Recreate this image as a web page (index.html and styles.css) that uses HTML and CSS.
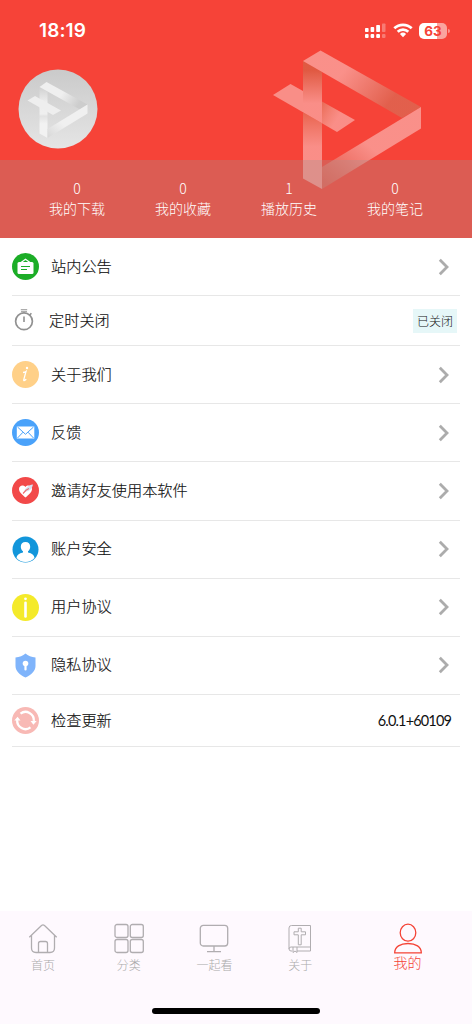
FILE: index.html
```html
<!DOCTYPE html>
<html lang="zh-CN">
<head>
<meta charset="utf-8">
<title>我的</title>
<link rel="stylesheet" href="styles.css">
</head>
<body>
<svg class="defs" width="0" height="0" aria-hidden="true">
  <defs>
    <linearGradient id="fold-top" x1="0" x2="1" y1="0" y2=".45"><stop offset=".4" stop-color="#fff" stop-opacity=".41"/><stop offset=".9" stop-color="#c98265" stop-opacity=".45"/></linearGradient>
    <linearGradient id="fold-upper" x1="0" x2="0" y1="0" y2="1"><stop offset=".15" stop-color="#c27850" stop-opacity=".42"/><stop offset=".68" stop-color="#fff" stop-opacity=".4"/></linearGradient>
    <linearGradient id="fold-lower" x1="0" x2="0" y1="0" y2="1"><stop offset="0" stop-color="#d88a68" stop-opacity=".45"/><stop offset=".45" stop-color="#fff" stop-opacity=".4"/></linearGradient>
    <linearGradient id="fold-bottom" x1="1" x2="0" y1="0" y2="1"><stop offset=".5" stop-color="#fff" stop-opacity=".41"/><stop offset=".95" stop-color="#c69a88" stop-opacity=".3"/></linearGradient>
    <linearGradient id="fold-right" x1="0" x2=".6" y1="0" y2=".35"><stop offset="0" stop-color="#dd9070" stop-opacity=".5"/><stop offset="1" stop-color="#fff" stop-opacity=".4"/></linearGradient>
    <symbol id="chevron" viewBox="0 0 12 18"><path d="M1.800 1.800 9 9l-7.200 7.200" fill="none" stroke="#acacac" stroke-width="2.800"/></symbol>
  </defs>
</svg>
<div class="screen">
  <header class="hero">
    <svg class="hero-logo" viewBox="0 0 150 140">
      <path fill="url(#fold-upper)" d="M31 11 50 22V73.300L31 62.300z"/>
      <path fill="url(#fold-lower)" d="M31 62.300 50 73.300V139L31 128.500z"/>
      <path fill="url(#fold-top)" d="M31 11 48.500.5 149 57l-19 11z"/>
      <path fill="url(#fold-bottom)" d="M149 57v21.500L50 139v-22z"/>
      <path fill="#fff" fill-opacity=".4" d="M1 45 18.500 34 31 41v21.300z"/>
      <path fill="url(#fold-right)" d="M50 51.500 83 70 65 82 50 73.300z"/>
    </svg>
    <div class="status">
      <span class="time">18:19</span>
      <div class="indicators">
        <svg width="21" height="16" viewBox="0 0 21 16" fill="#fff"><rect y="5" width="3.600" height="4" rx=".8"/><rect x="5.600" y="4" width="3.600" height="5" rx=".8"/><rect x="11.200" y="2" width="3.800" height="7" rx=".8"/><rect y="11" width="3.600" height="4" rx="1"/><rect x="5.600" y="11" width="3.600" height="4" rx="1"/><rect x="11.200" y="11" width="3.800" height="4" rx="1"/><g opacity=".3"><rect x="17" y=".5" width="3.500" height="8.500" rx=".8"/><rect x="17" y="11" width="3.500" height="4" rx="1"/></g></svg>
        <svg width="20" height="15" viewBox="0 0 20 15" fill="none" stroke="#fff" stroke-width="2.700"><path d="M1.300 5.300a12.500 12.500 0 0 1 17.400 0M4.700 8.800a7.600 7.600 0 0 1 10.600 0"/><path d="M6.900 10.900a4.500 4.500 0 0 1 6.200 0L10 14.200z" fill="#fff" stroke="none"/></svg>
        <div class="battery"><span class="charge">63</span></div>
      </div>
    </div>
    <div class="profile">
      <svg class="avatar" viewBox="0 0 80 80">
        <defs><linearGradient id="disc" x2="0" y2="1"><stop stop-color="#cacaca"/><stop offset="1" stop-color="#e5e5e5"/></linearGradient>
        <linearGradient id="grey-v" x2="0" y2="1"><stop stop-color="#d0d0d0"/><stop offset=".3" stop-color="#eee"/><stop offset=".53" stop-color="#efefef"/><stop offset=".57" stop-color="#e2e2e2"/><stop offset=".72" stop-color="#f2f2f2"/></linearGradient>
        <linearGradient id="grey-t" x2="1" y2=".4"><stop offset=".55" stop-color="#efefef"/><stop offset=".98" stop-color="#cdcdcd"/></linearGradient>
        <linearGradient id="grey-b" x1="1" x2="0" y2="1"><stop offset=".6" stop-color="#f0f0f0"/><stop offset="1" stop-color="#d7d7d7"/></linearGradient></defs>
        <circle cx="40" cy="40" r="39.500" fill="url(#disc)"/>
        <path fill="url(#grey-v)" d="M21.500 18 29.500 23v46l-8-4.500z"/><path fill="url(#grey-t)" d="M21.500 18 28.500 13 69.500 35.500 62 40.500z"/><path fill="url(#grey-b)" d="M69.500 35.500v9L29.500 69v-9z"/><path fill="#eee" d="M9.500 31.500 17 27 43 41.500 35 46z"/>
      </svg>
    </div>
    <div class="stats">
      <div class="stat"><span>0</span><span>我的下载</span></div>
      <div class="stat"><span>0</span><span>我的收藏</span></div>
      <div class="stat"><span>1</span><span>播放历史</span></div>
      <div class="stat"><span>0</span><span>我的笔记</span></div>
    </div>
  </header>

  <main class="menu">
    <div class="row">
      <svg class="icon" viewBox="0 0 27 27"><circle cx="13.500" cy="13.500" r="13.500" fill="#1cad27"/><path d="M7 9h13q1.500 0 1.500 1.500v9Q21.500 21 20 21H7q-1.500 0-1.500-1.500v-9Q5.500 9 7 9z" fill="#fff"/><path d="m9 9.500 4.500-3.300L18 9.500" fill="none" stroke="#fff" stroke-width="1.300"/><path d="M9 13.500h9M9 16.500h6" stroke="#1cad27" stroke-width="1.100"/></svg>
      <span class="label">站内公告</span><svg class="chevron"><use href="#chevron"/></svg>
    </div>
    <div class="row timer-row">
      <svg class="timer" viewBox="0 0 20 22" fill="none" stroke="#919191"><circle cx="10" cy="12.300" r="8.400" stroke-width="1.700"/><path d="M6.800.8h6.400M7 2.700h6" stroke-width="1.100"/><path d="M10 7.500v5.600M15.500 6.200l1.900-2" stroke-width="1.600"/></svg>
      <span class="label">定时关闭</span><span class="badge">已关闭</span>
    </div>
    <div class="row">
      <svg class="icon" viewBox="0 0 27 27"><circle cx="13.500" cy="13.500" r="13.500" fill="#ffd088"/><circle cx="15" cy="7" r="1.200" fill="#fff"/><path d="M11 11.500q2-.2 3-1l-2.200 8.200q-.4 2 2.500-.4" fill="none" stroke="#fff" stroke-width="1.300"/></svg>
      <span class="label">关于我们</span><svg class="chevron"><use href="#chevron"/></svg>
    </div>
    <div class="row">
      <svg class="icon" viewBox="0 0 27 27"><circle cx="13.500" cy="13.500" r="13.500" fill="#4aa2fa"/><rect x="4.800" y="7.500" width="17.500" height="12" fill="#fff"/><path d="m5.500 8 8 7.300 8-7.300M5.500 19l5.500-5.800M21.500 19 16 13.200" fill="none" stroke="#4aa2fa"/></svg>
      <span class="label">反馈</span><svg class="chevron"><use href="#chevron"/></svg>
    </div>
    <div class="row">
      <svg class="icon" viewBox="0 0 27 27"><circle cx="13.500" cy="13.500" r="13.500" fill="#f24949"/><path d="M13.500 20.500C10 17.500 7 15 7 12c0-3.800 4.500-4.700 6.500-2 2-2.700 6.500-1.500 6.500 2 0 3-3 5.500-6.500 8.500z" fill="#fff"/><path d="M12 15.500c.5-3.500 4-7.500 9-8-.8 3.500-2.800 6.500-7 7z" fill="#d6e2f3"/><path d="m11 16.500 3-3.200 3-1.800" fill="none" stroke="#f26c70" stroke-width="1.100"/></svg>
      <span class="label">邀请好友使用本软件</span><svg class="chevron"><use href="#chevron"/></svg>
    </div>
    <div class="row">
      <svg class="icon" viewBox="0 0 27 27"><circle cx="13.500" cy="13.500" r="13" fill="#1296db"/><path d="M13.500 6c3 0 4.700 2 4.700 4.700 0 1.900-.8 3.500-2.200 4.500v1.300c4 1 6.300 2.500 6.500 5.500a12.200 12.200 0 0 1-18 0c.2-3 2.500-4.500 6.500-5.500v-1.300c-1.400-1-2.200-2.600-2.200-4.500C8.800 8 10.500 6 13.500 6z" fill="#fff"/></svg>
      <span class="label">账户安全</span><svg class="chevron"><use href="#chevron"/></svg>
    </div>
    <div class="row">
      <svg class="icon" viewBox="0 0 27 27"><circle cx="13.500" cy="13.500" r="13.500" fill="#f4ea2a"/><circle cx="13.500" cy="4.800" r="1.400" fill="#fff"/><path d="M13.500 8.800V22.500" stroke="#fff" stroke-width="2.600" stroke-linecap="round"/></svg>
      <span class="label">用户协议</span><svg class="chevron"><use href="#chevron"/></svg>
    </div>
    <div class="row">
      <svg class="icon" viewBox="0 0 27 27"><path d="M13.500 1.500C16 4 19.500 5 23.500 5.500V14c0 5-4 8.800-10 11.500C7.500 22.800 3.500 19 3.500 14V5.500c4-.5 7.500-1.500 10-4z" fill="#7fb4fb"/><circle cx="13.500" cy="11.500" r="2.800" fill="#fff"/><path d="M13.500 12v5.500" stroke="#fff" stroke-width="2.200" stroke-linecap="round"/></svg>
      <span class="label">隐私协议</span><svg class="chevron"><use href="#chevron"/></svg>
    </div>
    <div class="row update-row">
      <svg class="icon" viewBox="0 0 27 27"><circle cx="13.500" cy="13.500" r="13.500" fill="#f8b9b5"/><g fill="none" stroke="#fff" stroke-width="2.300"><path d="M8.500 6.600a8.300 8.300 0 0 1 13.300 7.200M18.500 20.400A8.300 8.300 0 0 1 5.200 13.200"/></g><path d="M18.500 14h6.200l-3.300 3.800zM2.300 13.500h6.200L5.600 9.700z" fill="#fff"/></svg>
      <span class="label">检查更新</span><span class="version">6.0.1+60109</span>
    </div>
  </main>

  <nav class="tabs">
    <a class="tab"><svg viewBox="0 0 30 32"><path d="M1.300 14.300 13.500 2.500q1.500-1.300 3 0l12.200 11.800M3.500 12.500V25q0 4.500 4.500 4.500h14q4.500 0 4.500-4.500V12.500M10.500 29.500v-9q0-2 2-2h5q2 0 2 2v9"/></svg><span>首页</span></a>
    <a class="tab"><svg viewBox="0 0 30 32"><rect x="1" y="1.500" width="13" height="13" rx="2"/><rect x="16.300" y="1.500" width="13" height="13" rx="2"/><rect x="1" y="16.500" width="13" height="13" rx="2"/><rect x="16.300" y="16.500" width="13" height="13" rx="2"/></svg><span>分类</span></a>
    <a class="tab"><svg viewBox="0 0 30 32"><rect x="1.300" y="2.300" width="27.400" height="20.700" rx="3"/><path d="M15 23v5.500M8 28.700h14"/></svg><span>一起看</span></a>
    <a class="tab"><svg class="book" viewBox="0 0 30 32"><path d="M6.500 2.500h19v25.500H12M7 28H6q-2 0-2-2.200V5Q4 2.500 6.500 2.500M4 26q0-2 2-2h19.500M8 24v5.500L10 28l2 1.500V24"/><path d="M13.300 5.200h2.900v3.600h4.300v3h-4.300v10h-2.900v-10H9v-3h4.300z"/></svg><span>关于</span></a>
    <a class="tab active"><svg viewBox="0 0 30 32"><ellipse cx="15" cy="9.700" rx="7.800" ry="8.500"/><path d="M1.700 29.800c0-6 5.600-9.300 13.300-9.300s13.300 3.300 13.300 9.300z"/></svg><span>我的</span></a>
    <div class="home-bar"></div>
  </nav>
</div>
</body>
</html>
```

FILE: styles.css
```css
* { box-sizing: border-box; }
body { margin: 0; background: #fff; font-family: "Noto Sans CJK SC", sans-serif; font-weight: 300; color: #111; }
.defs { position: absolute; }
.screen { width: 472px; height: 1024px; display: flex; flex-direction: column; overflow: hidden; }

.hero { position: relative; height: 238px; background: #f64338; display: flex; flex-direction: column; }
.hero-logo { position: absolute; left: 272px; top: 50px; width: 150px; height: 140px; }
.status { height: 60px; padding: 1px 22px 0 39px; display: flex; align-items: center; justify-content: space-between; color: #fff; }
.time { font: 600 19px/24px Inter, sans-serif; letter-spacing: .1px; }
.indicators { display: flex; align-items: center; gap: 6.500px; }
.indicators svg { display: block; }
.battery { position: relative; width: 28px; height: 16px; margin-right: 3px; border-radius: 5px; background: linear-gradient(90deg, #fff 63%, #faa49e 63%); }
.battery::after { content: ""; position: absolute; right: -3px; top: 6px; width: 2px; height: 4px; border-radius: 0 2px 2px 0; background: #fa938d; }
.charge { display: block; text-align: center; font: 700 13.500px/16px Inter, sans-serif; color: #f64338; }
.profile { flex: 1; padding: 8.500px 17.500px 0; }
.avatar { display: block; width: 80px; height: 80px; }
.stats { position: relative; height: 78px; padding: 18px 24px 0; display: flex; background: rgba(160, 150, 144, .31); }
.stat { flex: 1; display: flex; flex-direction: column; align-items: center; font-size: 14px; line-height: 20px; color: #fff; }

.menu { flex: 1; padding: 0 12px; }
.row { height: 58.150px; display: flex; align-items: center; border-bottom: 1px solid #e7e7e7; }
.icon { width: 27px; height: 27px; margin-right: 12px; }
.label { flex: 1; padding-bottom: 4px; font-size: 15.200px; line-height: 22px; -webkit-text-stroke: .15px; }
.chevron { width: 12px; height: 18px; margin-right: 10px; }
.timer-row { height: 50px; padding-right: 3px; }
.timer { width: 20px; height: 22px; margin: 0 15px 1px 2px; }
.badge { width: 44px; height: 24px; background: #e6f7f8; font-size: 12px; line-height: 24px; text-align: center; }
.update-row { height: 52.200px; padding-right: 9px; }
.version { font-family: Lato, sans-serif; font-weight: 400; font-size: 14.500px; letter-spacing: -.85px; }

.tabs { position: relative; height: 113px; padding-top: 12px; display: flex; background: #fef9fe; }
.tab { width: 85.800px; display: flex; flex-direction: column; align-items: center; font-size: 12px; line-height: 17px; color: #aaa; }
.tab svg { width: 30px; height: 32px; margin-bottom: 1px; fill: none; stroke: #b0adb0; stroke-width: 1.300; }
.tab .book { stroke-width: 1; }
.tab.active { flex: 1; font-size: 14px; color: #f44336; }
.tab.active svg { margin-bottom: -1px; stroke: #f44336; }
.home-bar { position: absolute; left: 152px; bottom: 10px; width: 168px; height: 6px; border-radius: 3px; background: #000; }
```
